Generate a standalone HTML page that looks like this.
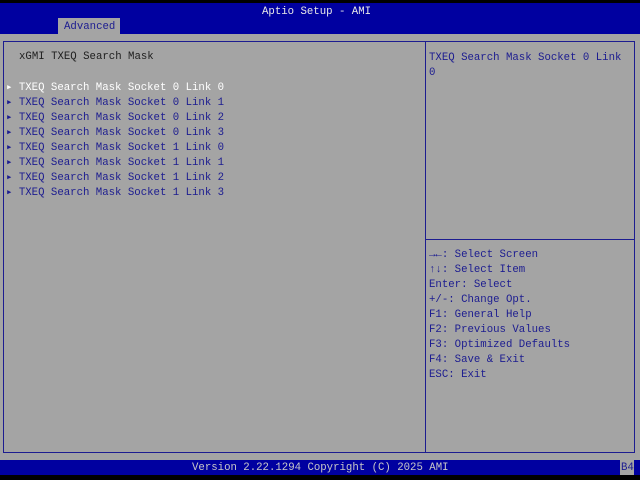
<!DOCTYPE html>
<html><head><style>
body{margin:0;width:640px;height:480px;background:#000;position:relative;overflow:hidden;font-family:"Liberation Mono","DejaVu Sans Mono",monospace;font-size:10.7px;}
.d{position:absolute;}
.t{position:absolute;white-space:pre;line-height:15px;}
</style></head><body>
<div class="d" style="left:0;top:3px;width:640px;height:31px;background:#0000a0"></div>
<div class="t" style="left:262px;top:5px;color:#e8e8e8">Aptio Setup - AMI</div>
<div class="d" style="left:58px;top:18px;width:62px;height:16px;background:#a4a4a4"></div>
<div class="t" style="left:64px;top:20px;color:#1c1c90">Advanced</div>
<div class="d" style="left:0;top:34px;width:640px;height:426px;background:#a4a4a4"></div>
<div class="d" style="left:3px;top:41px;width:630px;height:410px;border:1px solid #1c1c90"></div>
<div class="d" style="left:425px;top:41px;width:1px;height:411px;background:#1c1c90"></div>
<div class="d" style="left:426px;top:239px;width:208px;height:1px;background:#1c1c90"></div>
<div class="t" style="left:19px;top:50px;color:#202020">xGMI TXEQ Search Mask</div>
<div class="t" style="left:6px;top:81px;color:#fff">&#9656; TXEQ Search Mask Socket 0 Link 0</div>
<div class="t" style="left:6px;top:96px;color:#1c1c90">&#9656; TXEQ Search Mask Socket 0 Link 1
&#9656; TXEQ Search Mask Socket 0 Link 2
&#9656; TXEQ Search Mask Socket 0 Link 3
&#9656; TXEQ Search Mask Socket 1 Link 0
&#9656; TXEQ Search Mask Socket 1 Link 1
&#9656; TXEQ Search Mask Socket 1 Link 2
&#9656; TXEQ Search Mask Socket 1 Link 3</div>
<div class="t" style="left:429px;top:51px;color:#1c1c90">TXEQ Search Mask Socket 0 Link
0</div>
<div class="t" style="left:429px;top:248px;color:#1c1c90">&#8594;&#8592;: Select Screen
&#8593;&#8595;: Select Item
Enter: Select
+/-: Change Opt.
F1: General Help
F2: Previous Values
F3: Optimized Defaults
F4: Save &amp; Exit
ESC: Exit</div>
<div class="d" style="left:0;top:460px;width:640px;height:15px;background:#0000a0"></div>
<div class="t" style="left:192px;top:461px;color:#c8c8c8">Version 2.22.1294 Copyright (C) 2025 AMI</div>
<div class="d" style="left:620px;top:460px;width:14px;height:15px;background:#a4a4a4"></div>
<div class="t" style="left:621px;top:461px;color:#1c1c90">B4</div>
</body></html>
